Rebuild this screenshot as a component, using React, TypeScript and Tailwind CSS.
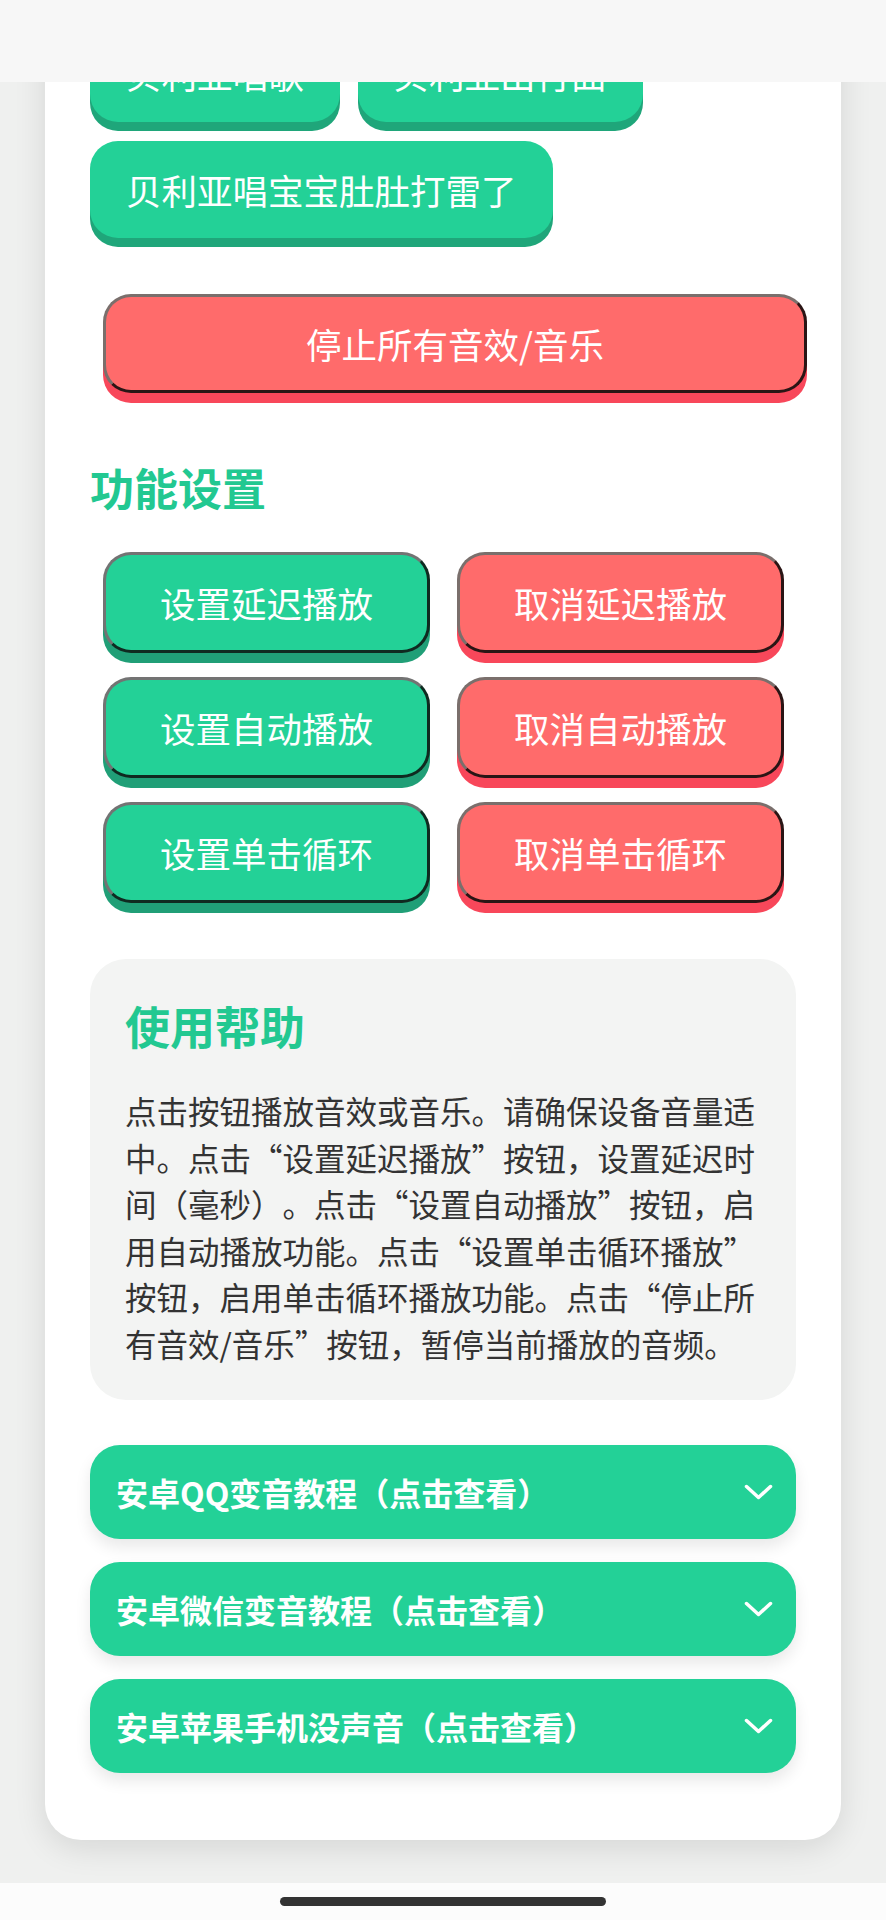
import React from 'react';

const font = { fontFamily: '"Noto Sans CJK SC", "Noto Sans", sans-serif' };

const tags = ['贝利亚唱歌', '贝利亚出行曲', '贝利亚唱宝宝肚肚打雷了'];

const settings: { on: string; off: string }[] = [
  { on: '设置延迟播放', off: '取消延迟播放' },
  { on: '设置自动播放', off: '取消自动播放' },
  { on: '设置单击循环', off: '取消单击循环' },
];

const guides = ['安卓QQ变音教程（点击查看）', '安卓微信变音教程（点击查看）', '安卓苹果手机没声音（点击查看）'];

function Chevron() {
  return (
    <svg width="29" height="16" viewBox="0 0 29 16" fill="none" stroke="white" strokeWidth="3.5" strokeLinecap="round" strokeLinejoin="round">
      <polyline points="2.5,2.5 14.5,13.5 26.5,2.5" />
    </svg>
  );
}

export default function App(): React.ReactNode {
  return (
    <div className="relative w-[886px] h-[1920px] overflow-hidden bg-[#eff0ef]" style={font}>
      {/* status bar over the scrolled page */}
      <div className="absolute top-0 left-0 right-0 z-10 h-[82px] bg-[#f7f7f7]" />

      <div className="flex flex-col">
        <div className="mx-[45px] h-[1840px] rounded-[36px] bg-white px-[45px] pt-[25px] shadow-[0_8px_32px_rgba(0,0,0,0.11)]">
          {/* sound buttons */}
          <div className="flex flex-wrap gap-x-[18px] gap-y-[19px]">
            {tags.map(t => (
              <button
                key={t}
                className="h-[97px] px-[36px] rounded-[28px] bg-[#23d197] text-white text-[35.5px] leading-none shadow-[0_9px_0_#1fa67a]"
              >
                {t}
              </button>
            ))}
          </div>

          <button className="mt-[56px] ml-[13px] w-[704px] h-[99px] rounded-[28px] bg-[#ff6b6b] text-white text-[35.5px] leading-none border-[3px] border-t-[#7a6f6c] border-l-[#7a6f6c] border-r-[#2a1515] border-b-[#2a1515] shadow-[0_10px_0_#f8475a]">
            停止所有音效/音乐
          </button>

          <h2 className="mt-[68px] text-[44px] leading-[53px] font-bold text-[#22c891]">功能设置</h2>

          <div className="mt-[38px] ml-[13px] w-[681px] grid grid-cols-2 gap-x-[27px] gap-y-[24px]">
            {settings.map(s => (
              <React.Fragment key={s.on}>
                <button className="h-[101px] rounded-[28px] bg-[#23d197] text-white text-[35.5px] leading-none border-[3px] border-t-[#737373] border-l-[#737373] border-r-[#0f2a20] border-b-[#0f2a20] shadow-[0_10px_0_#209f77]">
                  {s.on}
                </button>
                <button className="h-[101px] rounded-[28px] bg-[#ff6b6b] text-white text-[35.5px] leading-none border-[3px] border-t-[#7a6f6c] border-l-[#7a6f6c] border-r-[#2a1515] border-b-[#2a1515] shadow-[0_10px_0_#f8475a]">
                  {s.off}
                </button>
              </React.Fragment>
            ))}
          </div>

          {/* help */}
          <div className="mt-[56px] rounded-[36px] bg-[#f3f4f3] pl-[35px] pr-[27px] pt-[40px] pb-[33px]">
            <h3 className="text-[45px] leading-[54px] font-bold text-[#22c891]">使用帮助</h3>
            <p className="mt-[34px] text-[31.5px] leading-[46.6px] text-[#333333] [text-spacing-trim:space-all]">
              点击按钮播放音效或音乐。请确保设备音量适中。点击“设置延迟播放”&#8203;按钮，设置延迟时间（毫秒）。点击“设置自动播放”&#8203;按钮，启用自动播放功能。点击“设置单击循环播放”&#8203;按钮，启用单击循环播放功能。点击&#8203;“停止所有音效/音乐”&#8203;按钮，暂停当前播放的音频。
            </p>
          </div>

          {/* guides */}
          <div className="mt-[45px] flex flex-col gap-[23px]">
            {guides.map(g => (
              <div
                key={g}
                className="h-[94px] rounded-[30px] bg-[#23d197] pl-[26px] pr-[23px] flex items-center justify-between shadow-[0_8px_16px_rgba(0,0,0,0.09)]"
              >
                <span className="text-white text-[32px] font-bold leading-none">{g}</span>
                <Chevron />
              </div>
            ))}
          </div>
        </div>

        <div className="h-[43px]" />
        <div className="h-[37px] bg-[#fcfcfc] flex justify-center pt-[14px]">
          <div className="w-[326px] h-[9px] rounded-full bg-[#333333]" />
        </div>
      </div>
    </div>
  );
}
